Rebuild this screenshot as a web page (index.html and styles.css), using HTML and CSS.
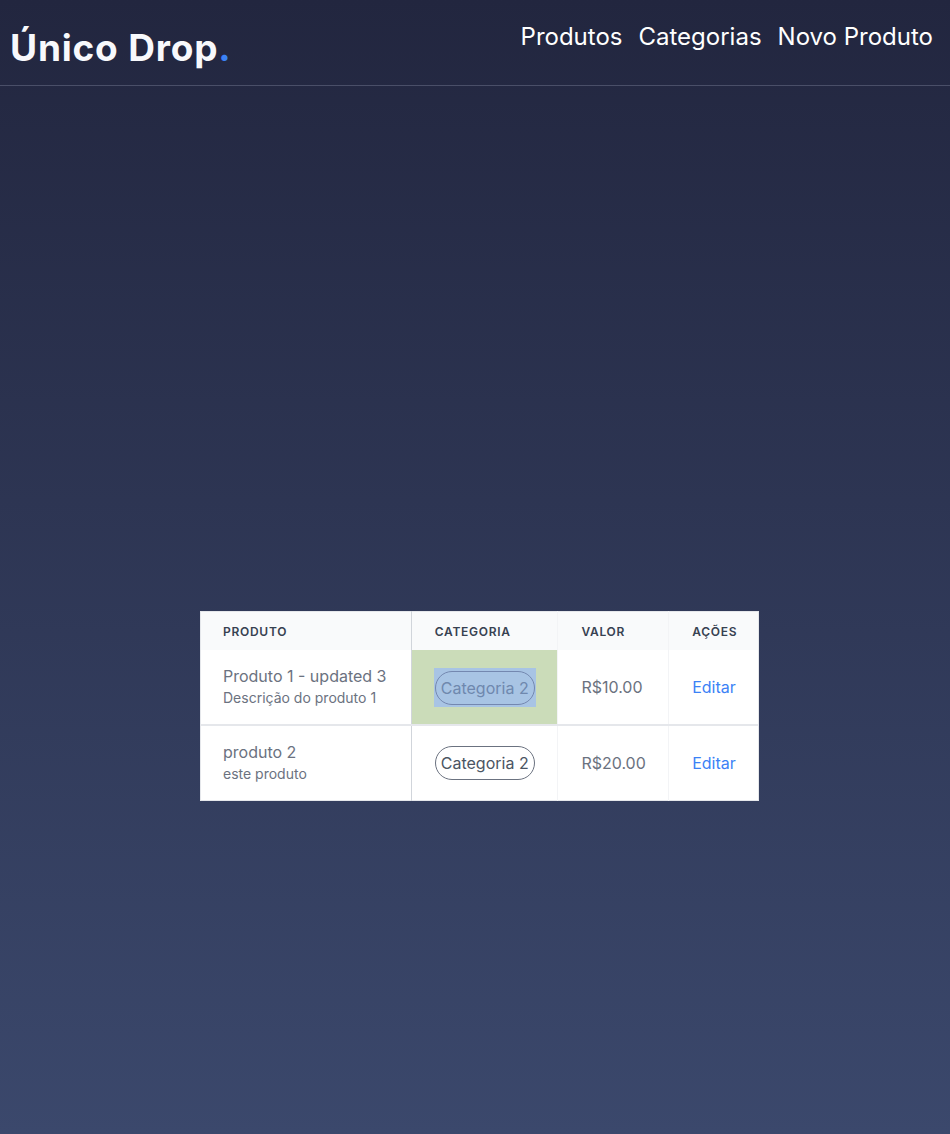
FILE: index.html
```html
<!DOCTYPE html>
<html lang="pt-BR">
<head>
<meta charset="utf-8">
<title>Único Drop</title>
<link rel="stylesheet" href="styles.css">
</head>
<body>
<header class="topbar">
  <a class="logo" href="#">Único Drop<span class="dot">.</span></a>
  <nav class="nav">
    <a href="#">Produtos</a>
    <a href="#">Categorias</a>
    <a href="#">Novo Produto</a>
  </nav>
</header>
<main class="main">
  <table class="products">
    <thead>
      <tr>
        <th class="c-prod">Produto</th>
        <th class="c-cat">Categoria</th>
        <th class="c-val">Valor</th>
        <th class="c-act">Ações</th>
      </tr>
    </thead>
    <tbody>
      <tr>
        <td class="c-prod">
          <div class="name">Produto 1 - updated 3</div>
          <div class="desc">Descrição do produto 1</div>
        </td>
        <td class="c-cat sel-cell"><span class="sel"><span class="pill">Categoria 2</span></span></td>
        <td class="c-val">R$10.00</td>
        <td class="c-act"><a href="#" class="edit">Editar</a></td>
      </tr>
      <tr>
        <td class="c-prod">
          <div class="name">produto 2</div>
          <div class="desc">este produto</div>
        </td>
        <td class="c-cat"><span class="pill">Categoria 2</span></td>
        <td class="c-val">R$20.00</td>
        <td class="c-act"><a href="#" class="edit">Editar</a></td>
      </tr>
    </tbody>
  </table>
</main>
</body>
</html>
```
FILE: styles.css
```css
html, body {
  margin: 0;
  padding: 0;
}
body {
  min-height: 1134px;
  background: linear-gradient(180deg, #22263f 0%, #3b486c 100%);
  font-family: Inter, "Noto Sans", sans-serif;
  color: #fff;
}
a { text-decoration: none; color: inherit; }

.topbar {
  height: 85px;
  border-bottom: 1px solid #4a4f68;
  display: flex;
  justify-content: space-between;
  align-items: flex-start;
  padding: 0 17px 0 10px;
}
.logo {
  font-size: 37px;
  font-weight: 700;
  color: #f8f9fc;
  margin-top: 26px;
  line-height: 44px;
  letter-spacing: 0.8px;
}
.logo .dot { color: #3b82f6; }
.nav {
  display: flex;
  gap: 16px;
  margin-top: 21px;
  font-size: 24px;
  line-height: 32px;
}
.nav a { color: #fff; }

.main {
  padding: 525px 0 0 200px;
}
.products {
  border-collapse: collapse;
  background: #fff;
  border: 1px solid #e5e7eb;
  width: 559px;
}
.products th {
  background: #f9fafb;
  text-align: left;
  font-size: 12px;
  font-weight: 600;
  letter-spacing: 0.06em;
  text-transform: uppercase;
  color: #374151;
  padding: 12px 0 11px 23px;
  height: 15px;
  line-height: 15px;
  border-right: 1px solid #f3f4f6;
}
.products td {
  padding: 0 0 0 23px;
  color: #6b7280;
  font-size: 16px;
  border-right: 1px solid #f3f4f6;
  height: 74px;
}
.products tbody tr + tr td { border-top: 2px solid #e5e7eb; height: 74px; }
.products .c-prod { width: 189px; padding-left: 22px; border-right: 1px solid #d1d5db; }
.products .c-cat { width: 123px; }
.products .c-val { width: 87px; }
.products .c-act { width: 66px; border-right: none; }

.name {
  font-size: 16px;
  line-height: 20px;
  color: #6b7280;
}
.desc {
  font-size: 14px;
  line-height: 20px;
  color: #6b7280;
  margin-top: 2px;
}
.sel-cell { background: #cbdcb9; }
.sel {
  display: inline-block;
  background: #a8c4e4;
  padding: 3px 1px 2px 1px;
  margin-left: -1px;
}
.pill {
  display: inline-block;
  border: 1.5px solid #6b7280;
  border-radius: 18px;
  padding: 0 5px;
  height: 32px;
  line-height: 32px;
  font-size: 16px;
  color: #4b5563;
}
.sel .pill { color: #6f88ae; border-color: #7488b0; }
.edit { color: #3b82f6; font-size: 16px; }
```
